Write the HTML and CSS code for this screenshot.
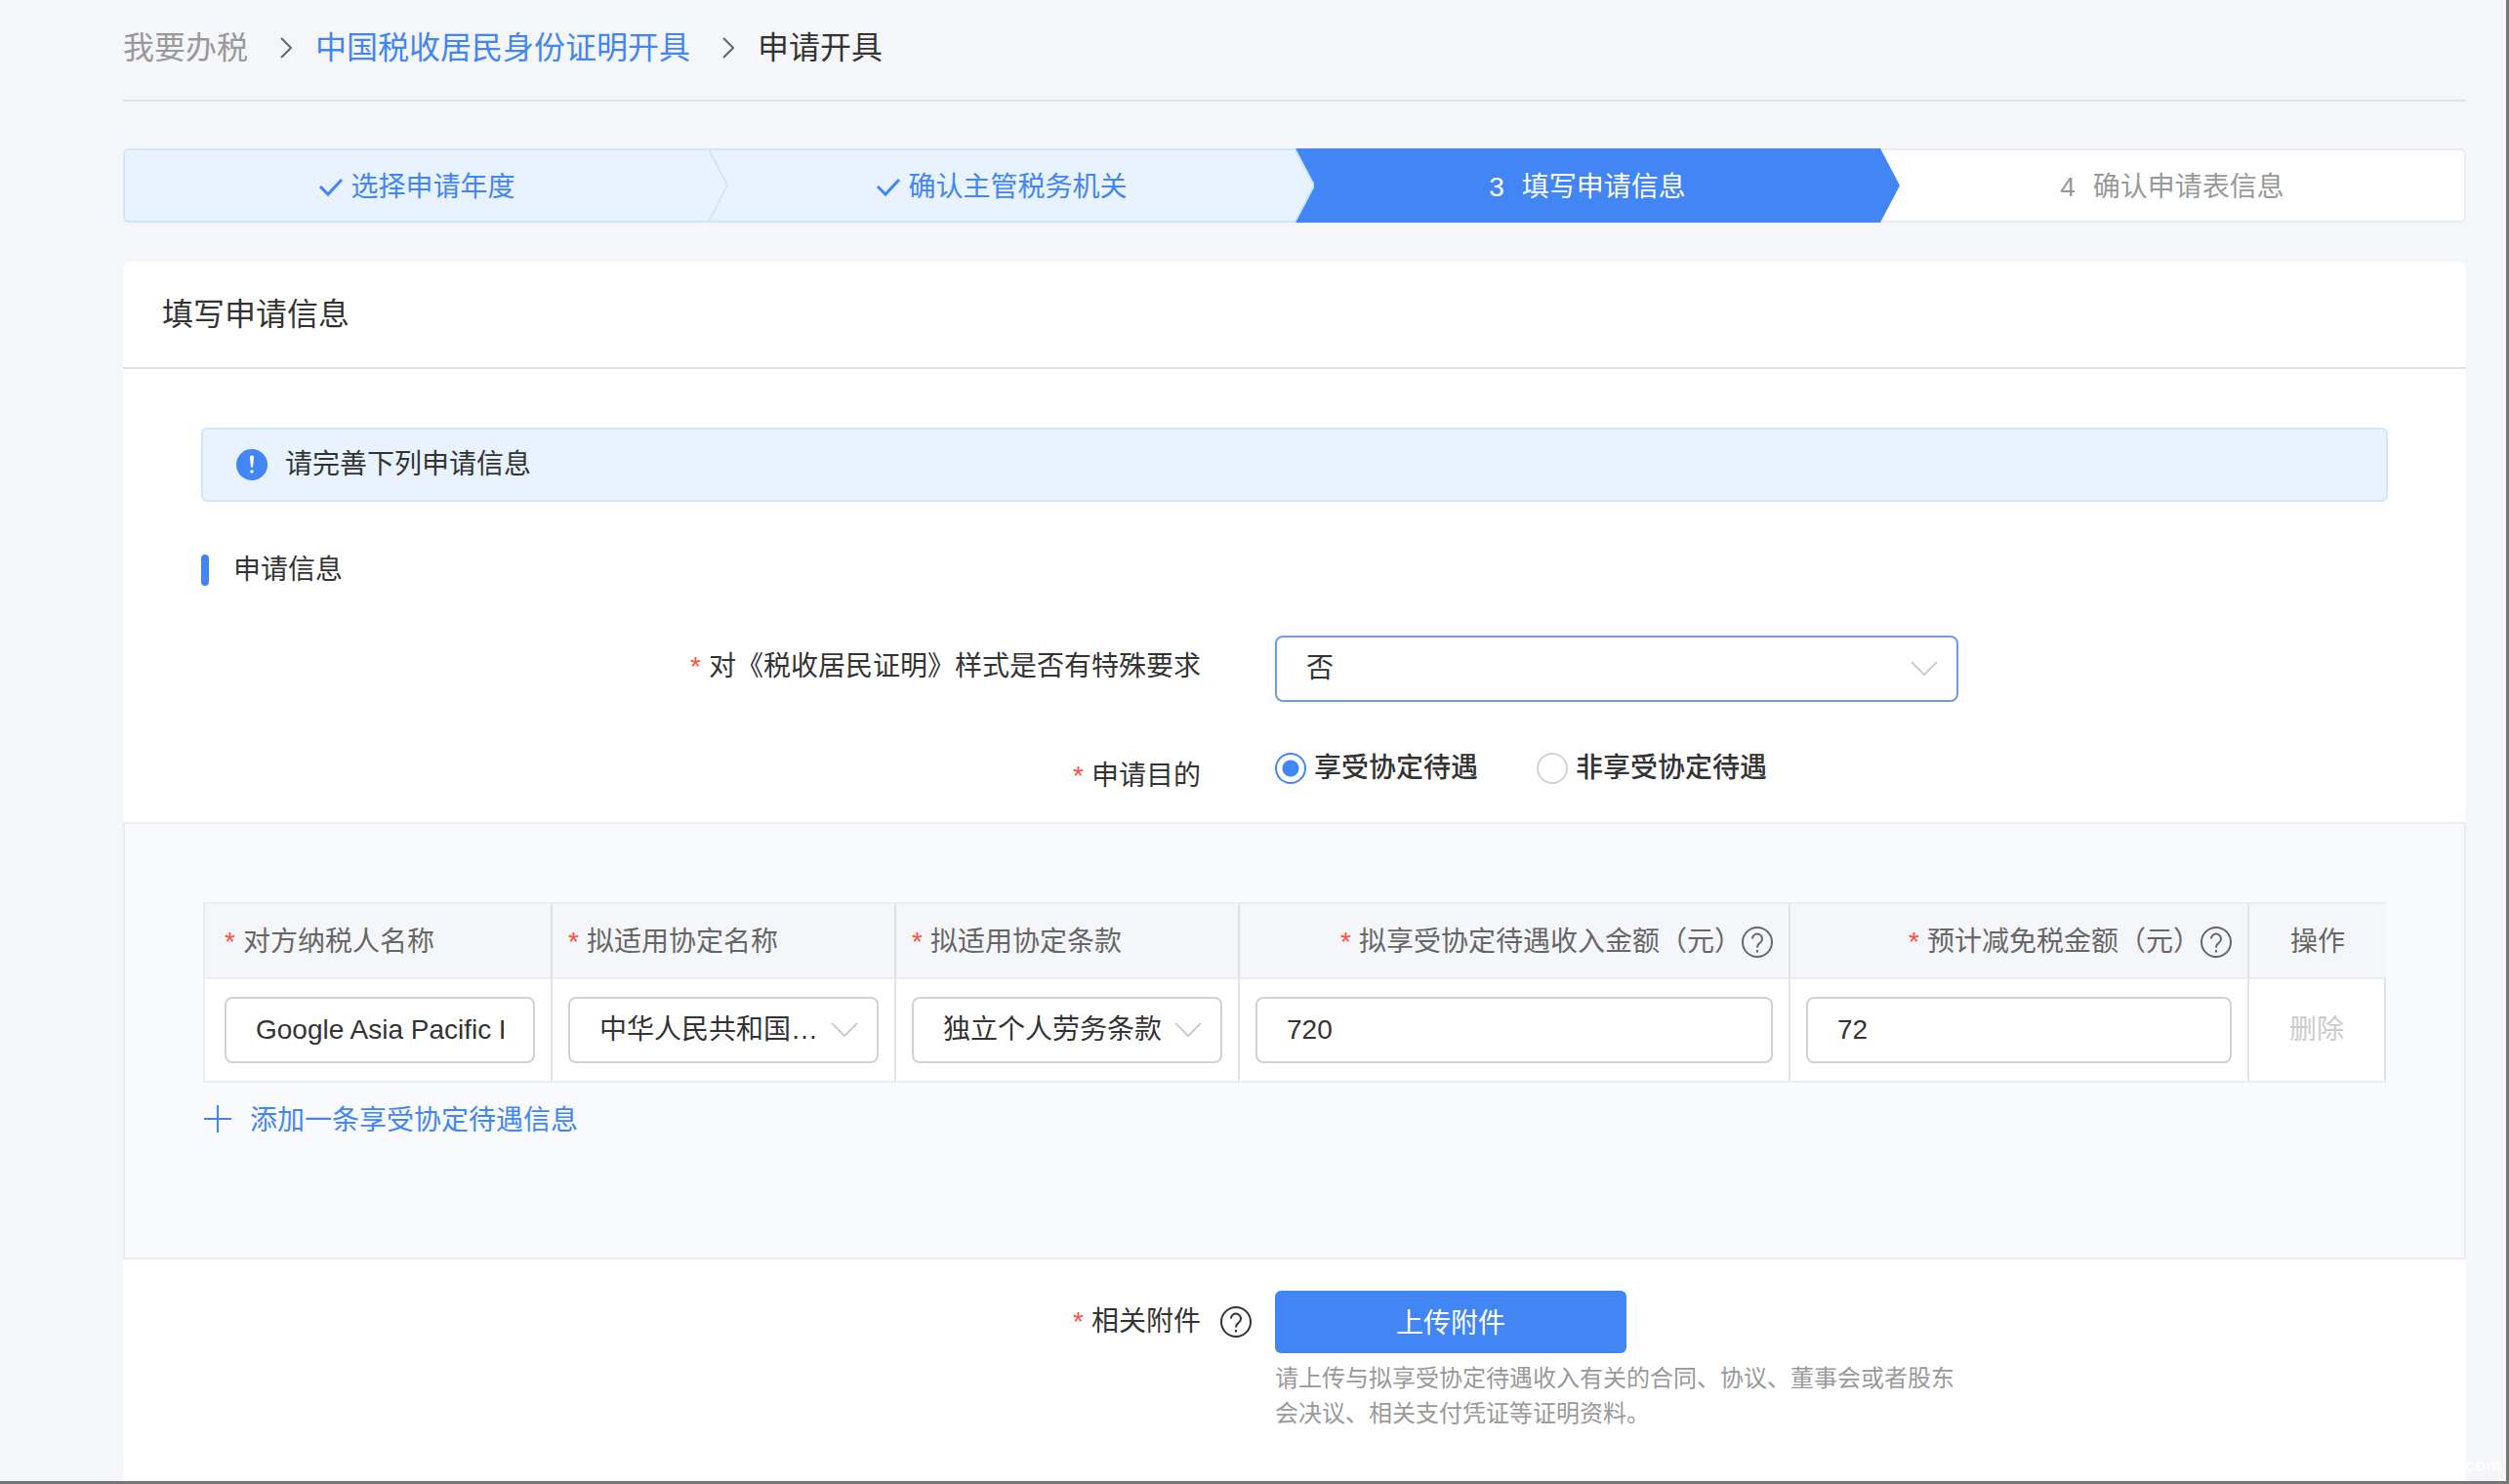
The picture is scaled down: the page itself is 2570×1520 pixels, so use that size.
FILE: index.html
```html
<!DOCTYPE html>
<html lang="zh-CN">
<head>
    <meta charset="UTF-8">
    <title>申请开具</title>
    <link rel="stylesheet" href="styles.css">
</head>
<body>
    <div class="container">
        <nav class="breadcrumb">
            <a class="crumb-root" href="#">我要办税</a>
            <svg class="crumb-arrow" viewBox="0 0 12 22"><path d="M1 1l10 10L1 21"/></svg>
            <a class="crumb-link" href="#">中国税收居民身份证明开具</a>
            <svg class="crumb-arrow" viewBox="0 0 12 22"><path d="M1 1l10 10L1 21"/></svg>
            <span>申请开具</span>
        </nav>

        <ol class="steps">
            <li class="step done">
                <svg class="check" viewBox="0 0 26 20"><path d="M2 9l8 8L24 2"/></svg>
                <span>选择申请年度</span>
                <svg class="step-arrow" viewBox="0 0 20 76" preserveAspectRatio="none"><path d="M0 1l19 37L0 75"/></svg>
            </li>
            <li class="step done">
                <svg class="check" viewBox="0 0 26 20"><path d="M2 9l8 8L24 2"/></svg>
                <span>确认主管税务机关</span>
                <svg class="step-arrow" viewBox="0 0 20 76" preserveAspectRatio="none"><path d="M0 0l20 38L0 76"/></svg>
            </li>
            <li class="step active">
                <span class="step-number">3</span>
                <span>填写申请信息</span>
                <svg class="step-arrow" viewBox="0 0 20 76" preserveAspectRatio="none"><path d="M0 0l20 38L0 76"/></svg>
            </li>
            <li class="step">
                <span class="step-number">4</span>
                <span>确认申请表信息</span>
            </li>
        </ol>

        <main class="card">
            <h1 class="card-header">填写申请信息</h1>

            <div class="alert">
                <svg class="alert-icon" viewBox="0 0 32 32">
                    <circle cx="16" cy="16" r="16"/>
                    <path d="M14 8.500a2 2 0 0 1 4 0l-1 10h-2z"/>
                    <circle class="dot" cx="16" cy="23" r="1.800"/>
                </svg>
                <span>请完善下列申请信息</span>
            </div>

            <h2 class="section-header">申请信息</h2>

            <form>
                <div class="form-row">
                    <label class="form-label required" for="special">对《税收居民证明》样式是否有特殊要求</label>
                    <div class="form-control">
                        <div class="select focused">
                            <select id="special">
                                <option>否</option>
                                <option>是</option>
                            </select>
                            <svg class="select-arrow" viewBox="0 0 28 16"><path d="M1 1l13 13L27 1"/></svg>
                        </div>
                    </div>
                </div>

                <div class="form-row" role="radiogroup" aria-labelledby="purpose">
                    <span class="form-label required" id="purpose">申请目的</span>
                    <div class="form-control radio-group">
                        <label class="radio"><input type="radio" name="purpose" checked>享受协定待遇</label>
                        <label class="radio"><input type="radio" name="purpose">非享受协定待遇</label>
                    </div>
                </div>

                <div class="panel">
                    <table>
                        <colgroup>
                            <col class="col-name">
                            <col class="col-treaty">
                            <col class="col-treaty">
                            <col class="col-income">
                            <col class="col-tax">
                            <col>
                        </colgroup>
                        <thead>
                            <tr>
                                <th><span class="required">对方纳税人名称</span></th>
                                <th><span class="required">拟适用协定名称</span></th>
                                <th><span class="required">拟适用协定条款</span></th>
                                <th>
                                    <div class="amount-header">
                                        <span class="required">拟享受协定待遇收入金额（元）</span>
                                        <svg class="help" viewBox="0 0 32 32"><circle cx="16" cy="16" r="15"/><path d="M11 12.500a5 5 0 1 1 8 4q-3 2-3 5M16 24v2.500"/></svg>
                                    </div>
                                </th>
                                <th>
                                    <div class="amount-header">
                                        <span class="required">预计减免税金额（元）</span>
                                        <svg class="help" viewBox="0 0 32 32"><circle cx="16" cy="16" r="15"/><path d="M11 12.500a5 5 0 1 1 8 4q-3 2-3 5M16 24v2.500"/></svg>
                                    </div>
                                </th>
                                <th class="action">操作</th>
                            </tr>
                        </thead>
                        <tbody>
                            <tr>
                                <td><input type="text" aria-label="对方纳税人名称" value="Google Asia Pacific Pte. Ltd."></td>
                                <td>
                                    <div class="select">
                                        <select aria-label="拟适用协定名称">
                                            <option>中华人民共和国政府和新加坡共和国政府</option>
                                        </select>
                                        <svg class="select-arrow" viewBox="0 0 28 16"><path d="M1 1l13 13L27 1"/></svg>
                                    </div>
                                </td>
                                <td>
                                    <div class="select">
                                        <select aria-label="拟适用协定条款">
                                            <option>独立个人劳务条款</option>
                                        </select>
                                        <svg class="select-arrow" viewBox="0 0 28 16"><path d="M1 1l13 13L27 1"/></svg>
                                    </div>
                                </td>
                                <td><input type="text" aria-label="拟享受协定待遇收入金额" value="720"></td>
                                <td><input type="text" aria-label="预计减免税金额" value="72"></td>
                                <td class="action"><button type="button" class="delete" disabled>删除</button></td>
                            </tr>
                        </tbody>
                    </table>
                    <button type="button" class="add">
                        <svg viewBox="0 0 30 30"><path d="M15 1v28M1 15h28"/></svg>
                        <span>添加一条享受协定待遇信息</span>
                    </button>
                </div>

                <div class="form-row">
                    <label class="form-label required" for="upload">相关附件</label>
                    <svg class="help" viewBox="0 0 32 32"><circle cx="16" cy="16" r="15"/><path d="M11 12.500a5 5 0 1 1 8 4q-3 2-3 5M16 24v2.500"/></svg>
                    <div class="form-control">
                        <button type="button" class="upload" id="upload">上传附件</button>
                        <p class="hint">请上传与拟享受协定待遇收入有关的合同、协议、董事会或者股东会决议、相关支付凭证等证明资料。</p>
                    </div>
                </div>
            </form>
        </main>
    </div>
    <div class="watermark">com</div>
</body>
</html>
```

FILE: styles.css
```css
* {
    box-sizing: border-box;
}
body {
    position: relative;
    display: flex;
    min-height: 100vh;
    margin: 0;
    border-right: 3px solid #757575;
    border-bottom: 3px solid #757575;
    background-color: #f5f6fa;
    color: #333;
    font-family: "Liberation Sans", "Noto Sans CJK SC", sans-serif;
    font-size: 28px;
    line-height: 40px;
}
button, input, select {
    font: inherit;
    color: inherit;
}
svg {
    flex: none;
    fill: none;
    stroke: currentColor;
    stroke-width: 2;
}
a {
    text-decoration: none;
}
.container {
    flex: 1;
    display: flex;
    flex-direction: column;
    padding: 0 41px 0 126px;
}

/* breadcrumb */
.breadcrumb {
    display: flex;
    align-items: center;
    height: 104px;
    padding-bottom: 5px;
    border-bottom: 2px solid #e1e2e8;
    font-size: 32px;
}
.crumb-root {
    color: #999;
}
.crumb-link {
    color: #4285f4;
}
.crumb-arrow {
    width: 12px;
    height: 22px;
    margin: 0 24px 0 33px;
    color: #666;
}

/* steps */
.steps {
    display: flex;
    margin: 48px 0 40px;
    padding: 0;
    list-style: none;
}
.step {
    position: relative;
    display: flex;
    justify-content: center;
    align-items: center;
    gap: 18px;
    width: 25%;
    height: 76px;
    padding-top: 3px;
    border: solid #ebecf1;
    border-width: 2px 0;
    background: #fff;
    color: #999;
}
.step:first-child {
    border-left-width: 2px;
    border-radius: 6px 0 0 6px;
}
.step:last-child {
    border-right-width: 2px;
    border-radius: 0 6px 6px 0;
}
.step.done {
    gap: 7px;
    border-color: #d0e6fa;
    background: #e8f3ff;
    color: #4285f4;
}
.step.active {
    border-color: #4285f4;
    background: #4285f4;
    color: #fff;
}
.step-arrow {
    position: absolute;
    z-index: 1;
    top: -2px;
    right: -20px;
    width: 20px;
    height: 76px;
}
.done .step-arrow {
    fill: #e8f3ff;
    stroke: #d0e6fa;
}
.active .step-arrow {
    fill: #4285f4;
    stroke: none;
}
.check {
    width: 26px;
    height: 20px;
    stroke-width: 3;
}

/* card */
.card {
    flex: 1;
    border-radius: 6px 6px 0 0;
    background: #fff;
}
.card-header {
    margin: 0;
    padding: 34px 40px;
    border-bottom: 2px solid #e1e2e8;
    font-size: 32px;
    font-weight: 400;
}
.alert {
    display: flex;
    align-items: center;
    gap: 18px;
    height: 76px;
    margin: 60px 80px 50px;
    padding: 0 34px;
    border: 2px solid #d0e6fa;
    border-radius: 6px;
    background: #e8f3ff;
}
.alert-icon {
    width: 32px;
    height: 32px;
    fill: #4285f4;
    stroke: none;
}
.alert-icon path, .alert-icon .dot {
    fill: #fff;
}
.section-header {
    display: flex;
    align-items: center;
    gap: 25px;
    margin: 0 80px 47px;
    font-size: 28px;
    font-weight: 400;
}
.section-header::before {
    content: "";
    width: 8px;
    height: 32px;
    border-radius: 4px;
    background: #4285f4;
}
.required::before {
    content: "*";
    margin-right: 8px;
    color: #ff5042;
}

/* form */
.form-row {
    display: grid;
    grid-template-columns: 46% 76px 1fr;
}
.form-label {
    line-height: 63px;
    text-align: right;
}
.form-control {
    grid-column: 3;
    width: 700px;
}
.form-row > .help {
    margin: 16px 20px;
}
.select {
    position: relative;
}
select, input[type="text"] {
    display: block;
    width: 100%;
    height: 68px;
    padding: 0 30px;
    border: 2px solid #d0d1d9;
    border-radius: 8px;
    outline: none;
    background: #fff;
}
select {
    appearance: none;
    padding-right: 52px;
    overflow: hidden;
    text-overflow: ellipsis;
    white-space: nowrap;
}
.focused select {
    border-color: #6a9ceb;
}
.select-arrow {
    position: absolute;
    top: 26px;
    right: 21px;
    width: 28px;
    height: 16px;
    color: #ccc;
    pointer-events: none;
}
.radio-group {
    display: flex;
    align-items: center;
    gap: 60px;
    height: 48px;
}
.form-row + .form-row {
    margin-top: 44px;
}
.radio {
    display: flex;
    align-items: center;
    gap: 8px;
    font-weight: 500;
}
.radio input {
    appearance: none;
    width: 32px;
    height: 32px;
    margin: 0;
    border: 2px solid #d0d1d9;
    border-radius: 50%;
    background: #fff;
}
.radio input:checked {
    border-color: #4285f4;
    background: radial-gradient(circle, #4285f4 8px, #fff 9px);
}
.help {
    width: 32px;
    height: 32px;
}

/* treaty table */
.panel {
    height: 448px;
    margin: 16px 0 32px;
    padding: 80px;
    border: 2px solid #ebecf1;
    background: #f9fafe;
}
table {
    width: 100%;
    table-layout: fixed;
    border-collapse: separate;
    border-spacing: 0;
    border: 2px solid #ebedf2;
    border-right: none;
}
.col-name {
    width: 356px;
}
.col-treaty {
    width: 352px;
}
.col-income {
    width: 564px;
}
.col-tax {
    width: 470px;
}
th, td {
    padding: 0 16px;
    border-right: 2px solid #e1e2e8;
}
th:first-child, td:first-child {
    padding-left: 20px;
}
th {
    height: 77px;
    padding-top: 2px;
    border-bottom: 2px solid #ebedf2;
    background: #f5f6fa;
    color: #666;
    font-weight: 400;
    text-align: left;
}
th:last-child {
    border-right: none;
}
td {
    height: 104px;
    background: #fff;
}
.amount-header {
    display: flex;
    justify-content: flex-end;
    align-items: center;
    white-space: nowrap;
}
th.action, td.action {
    text-align: center;
}
.delete {
    padding: 0;
    border: none;
    background: none;
    color: #ccc;
}
.add {
    display: flex;
    align-items: center;
    gap: 18px;
    margin-top: 19px;
    padding: 0;
    border: none;
    background: none;
    color: #4285f4;
    cursor: pointer;
}
.add svg {
    width: 30px;
    height: 30px;
    margin-bottom: 4px;
}

/* upload */
.upload {
    display: block;
    width: 360px;
    height: 64px;
    padding: 3px 0 0;
    border: none;
    border-radius: 6px;
    background: #4285f4;
    color: #fff;
    cursor: pointer;
}
.hint {
    margin: 8px 0 0;
    color: #999;
    font-size: 24px;
    line-height: 36px;
}
.watermark {
    position: absolute;
    right: 5px;
    bottom: 6px;
    color: #fff;
    font-size: 18px;
    font-weight: 700;
    line-height: 20px;
}
```
